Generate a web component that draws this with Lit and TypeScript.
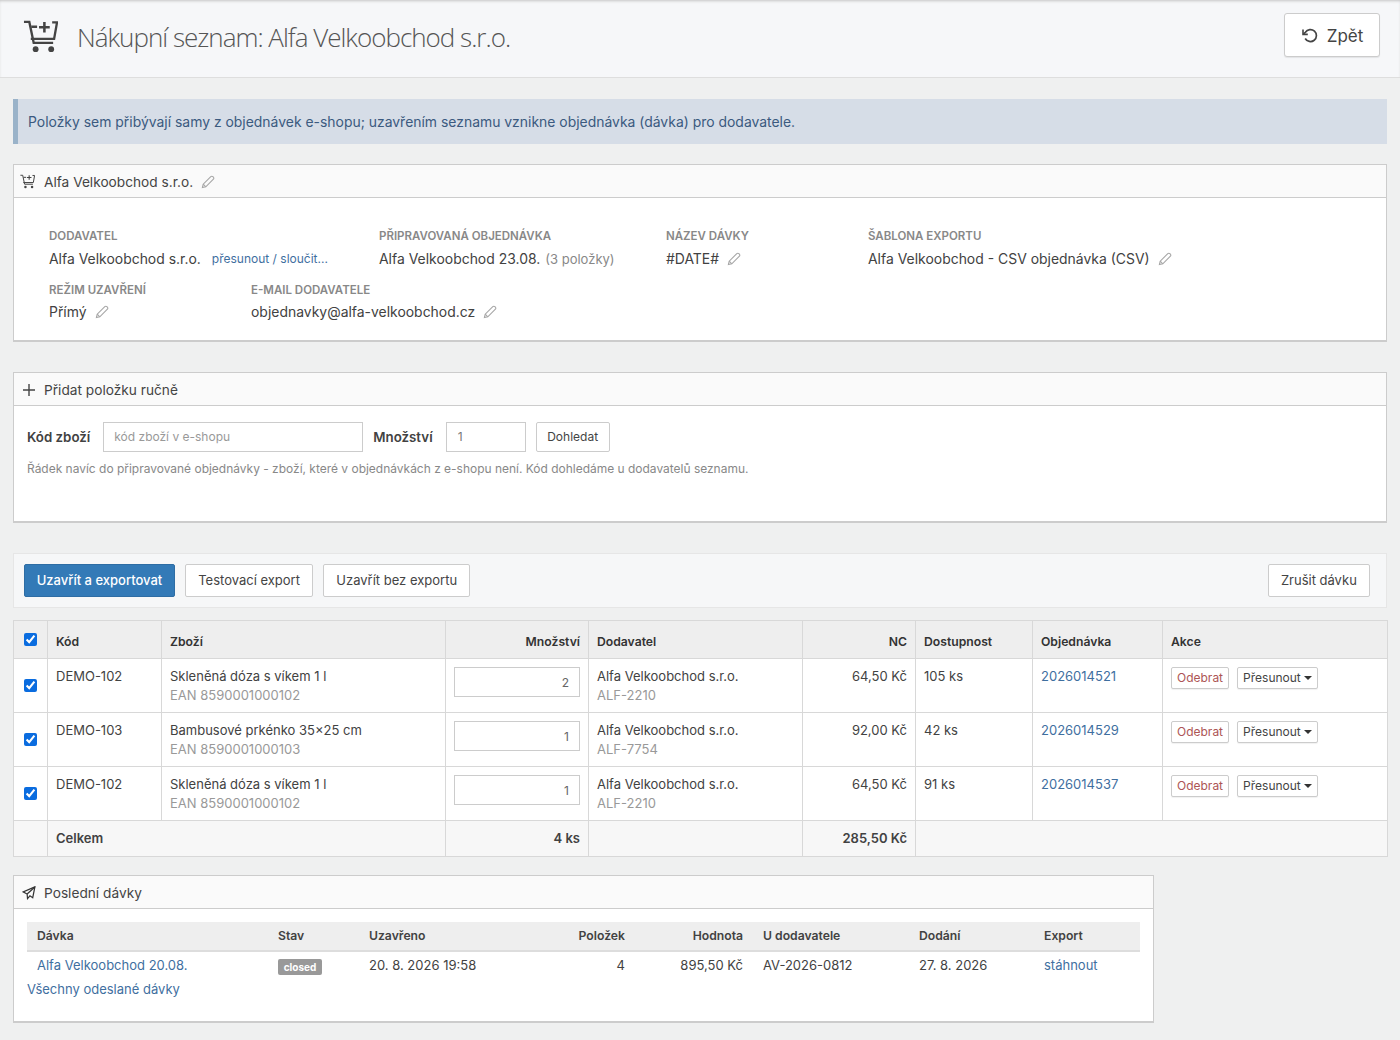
import { LitElement, html, css, svg } from "lit";
import { customElement } from "lit/decorators.js";

const cartIcon = (size: number) => html`<svg class="cart" width=${size} height=${size} viewBox="0 0 36 36" fill="none" stroke="currentColor">
  ${svg`<path d="M1 3h5.5l4.5 21.5h20" stroke-width="2.4"/>
  <path d="M8 20.5h24l3-17h-5M8.5 8h6" stroke-width="2.4"/>
  <path d="M22 3v11M16.5 8.5h11" stroke-width="2.6"/>
  <circle cx="13" cy="31" r="3" fill="currentColor" stroke="none"/>
  <circle cx="29" cy="31" r="3" fill="currentColor" stroke="none"/>`}
</svg>`;

const pencil = html`<svg class="pencil" width="14" height="14" viewBox="0 0 14 14" fill="none" stroke="#a6a6a6" stroke-width="1.1">
  ${svg`<path d="M1.4 12.6l.8-3.4L9.8 1.6a1.4 1.4 0 0 1 2 0l.6.6a1.4 1.4 0 0 1 0 2L4.8 11.8z"/><path d="M2.2 9.2l2.6 2.6"/>`}
</svg>`;

const items = [
  { code: "DEMO-102", name: "Skleněná dóza s víkem 1 l", ean: "EAN 8590001000102", qty: 2, sku: "ALF-2210", nc: "64,50 Kč", stock: "105 ks", order: "2026014521" },
  { code: "DEMO-103", name: "Bambusové prkénko 35×25 cm", ean: "EAN 8590001000103", qty: 1, sku: "ALF-7754", nc: "92,00 Kč", stock: "42 ks", order: "2026014529" },
  { code: "DEMO-102", name: "Skleněná dóza s víkem 1 l", ean: "EAN 8590001000102", qty: 1, sku: "ALF-2210", nc: "64,50 Kč", stock: "91 ks", order: "2026014537" },
];

@customElement("app-root")
export class AppRoot extends LitElement {
  static styles = css`
    :host {
      display: block;
      min-height: 1040px;
      background: #eff0f0;
      font-family: Inter, "Noto Sans", sans-serif;
      font-size: 14px;
      line-height: 20px;
      color: #424242;
      overflow: hidden;
    }
    * { box-sizing: border-box; }
    a { color: #3f6f9f; text-decoration: none; }

    .page-head {
      height: 78px;
      padding: 0 20px 7px 23px;
      display: flex;
      align-items: center;
      justify-content: space-between;
      background: #f6f7f9;
      border-bottom: 1px solid #dedede;
      box-shadow: inset 0 2px 3px -1px #c4c4c4;
    }
    .title { display: flex; align-items: center; gap: 19px; margin-top: 3px; color: #555; }
    .title .cart { color: #444; }
    h1 {
      margin: 0;
      font-family: "Open Sans", sans-serif;
      font-weight: 300;
      font-size: 26px;
      letter-spacing: -1px;
      line-height: 36px;
      color: #555;
    }
    .back {
      width: 96px;
      height: 44px;
      padding-top: 1px;
      display: flex;
      align-items: center;
      justify-content: center;
      gap: 8px;
      background: #fff;
      border: 1px solid #ccc;
      border-radius: 3px;
      font-size: 17px;
      color: #444;
      box-shadow: 0 1px 1px rgba(0,0,0,.08);
    }

    .content { padding: 21px 13px 0; }
    .alert {
      height: 45px;
      display: flex;
      align-items: center;
      padding-left: 10px;
      background: #d6dde7;
      border-left: 5px solid #9ab3c9;
      font-size: 13.93px;
      color: #3b5a7f;
    }

    .panel {
      background: #fff;
      border: 1px solid #ccc;
      border-bottom-width: 2px;
    }
    .panel-head {
      height: 33px;
      display: flex;
      align-items: center;
      gap: 8px;
      padding: 1px 0 0 8px;
      background: #fafafa;
      border-bottom: 1px solid #ccc;
      font-size: 13.7px;
      color: #444;
    }
    .panel-head .cart { color: #444; margin: 0 1px 0 -2px; }
    .supplier { margin-top: 20px; height: 178px; }
    .manual { margin-top: 30px; height: 151px; }

    .facts { padding: 30px 35px 0; }
    .facts-row { display: flex; height: 54px; }
    .fact { flex: none; }
    .fact label {
      display: block;
      height: 16px;
      font-size: 11.5px;
      line-height: 16px;
      font-weight: 600;
      color: #888;
      text-transform: uppercase;
    }
    .fact .val { display: flex; align-items: center; gap: 8px; margin-top: 5px; font-size: 13.95px; }
    .facts-row + .facts-row .val { margin-top: 4px; }
    .fact .muted { color: #888; font-size: 13px; margin-left: -3px; }
    .fact a { font-size: 12px; margin-left: 3px; }
    .f1 { width: 330px; }
    .f2 { width: 287px; }
    .f3 { width: 202px; }
    .f4 { width: 400px; }
    .f5 { width: 202px; }

    .add-form { padding: 16px 13px; }
    .add-row { display: flex; align-items: center; gap: 10px; }
    .add-row b { font-size: 13.3px; font-weight: 600; }
    .add-row b + .input { margin-left: 3px; }
    .input {
      height: 30px;
      display: flex;
      align-items: center;
      padding: 0 10px;
      background: #fff;
      border: 1px solid #ccc;
      font-size: 12px;
      color: #999;
    }
    .input.code { width: 260px; }
    .input.qty { width: 80px; padding-left: 11px; color: #777; }
    .btn {
      display: inline-flex;
      align-items: center;
      justify-content: center;
      background: #fff;
      border: 1px solid #ccc;
      border-radius: 2px;
      color: #444;
    }
    .btn.search { height: 30px; width: 74px; font-size: 12px; }
    .hint { margin-top: 7px; font-size: 11.97px; color: #888; }

    .toolbar {
      margin-top: 30px;
      height: 55px;
      display: flex;
      align-items: center;
      gap: 10px;
      padding: 0 16px 0 10px;
      background: #f6f7f8;
      border: 1px solid #e6e6e6;
    }
    .toolbar .btn { height: 33px; padding: 0 12.2px 1px; font-size: 13px; }
    .toolbar .primary { width: 151px; padding: 0 0 1px; background: #337ab7; border-color: #2e6da4; color: #fff; font-weight: 500; }
    .toolbar .end { margin-left: auto; }

    table { border-collapse: collapse; table-layout: fixed; }
    .items { margin-top: 12px; width: 1374px; background: #fff; font-size: 13px; line-height: 19px; }
    .items th, .items td { border: 1px solid #d8d8d8; padding: 0 8px; vertical-align: top; text-align: left; font-weight: 400; }
    .items thead th {
      height: 38px;
      padding-top: 4px;
      vertical-align: middle;
      background: #eee;
      font-size: 12.2px;
      font-weight: 600;
      color: #333;
    }
    .items thead .chk { padding: 0 0 3px; }
    .items tbody td { height: 54px; padding-top: 8px; }
    .items tfoot td { height: 36px; vertical-align: middle; background: #f7f7f7; font-weight: 600; }
    .items .r { text-align: right; }
    .items .chk { padding: 0; text-align: center; }
    .items tbody .chk { vertical-align: middle; padding: 0 0 2px; }
    input[type="checkbox"] { width: 13px; height: 13px; margin: 0; display: inline-block; vertical-align: middle; accent-color: #0a6cdf; }
    .sub { display: block; color: #999; }
    .qty-box {
      height: 30px;
      display: flex;
      align-items: center;
      justify-content: flex-end;
      padding: 0 10px;
      border: 1px solid #ccc;
      font-size: 12px;
      color: #666;
    }
    .actions { display: flex; gap: 8px; }
    .actions .btn { height: 22px; padding: 0 5px 1px; font-size: 12px; box-shadow: 0 1px 1px rgba(0,0,0,.06); }
    .actions .danger { color: #ad5555; }
    .caret {
      display: inline-block;
      width: 0;
      height: 0;
      margin: 1px 0 0 3px;
      border-left: 4px solid transparent;
      border-right: 4px solid transparent;
      border-top: 4px solid #333;
    }

    .history { margin-top: 18px; width: 1141px; height: 148px; }
    .history-body { padding: 13px 13px 0; }
    .batches { width: 1113px; font-size: 13px; }
    .batches th {
      height: 29px;
      padding: 0 10px;
      background: #eee;
      border-bottom: 2px solid #ddd;
      text-align: left;
      font-size: 12.2px;
      font-weight: 600;
    }
    .batches td { height: 26px; padding: 0 10px; }
    .batches .r { text-align: right; }
    .badge {
      display: block;
      width: 44px;
      height: 16px;
      margin-top: 4px;
      text-align: center;
      border-radius: 2px;
      background: #999;
      color: #fff;
      font-size: 10px;
      line-height: 16px;
      font-weight: 700;
    }
    .all { display: block; margin-top: 2px; font-size: 13px; }
  `;

  render() {
    return html`
      <header class="page-head">
        <div class="title">${cartIcon(35)}<h1>Nákupní seznam: Alfa Velkoobchod s.r.o.</h1></div>
        <div class="back">
          <svg width="18" height="18" viewBox="0 0 18 18" fill="none" stroke="#444" stroke-width="1.7">
            ${svg`<path d="M4.2 11.5a6 6 0 1 0 .2-6.2L2.4 7"/><path d="M2 2.6V7.4h4.8" stroke-width="1.6"/>`}
          </svg>
          Zpět
        </div>
      </header>

      <main class="content">
        <div class="alert">Položky sem přibývají samy z objednávek e-shopu; uzavřením seznamu vznikne objednávka (dávka) pro dodavatele.</div>

        <section class="panel supplier">
          <div class="panel-head">${cartIcon(15)}<span>Alfa Velkoobchod s.r.o.</span>${pencil}</div>
          <div class="facts">
            <div class="facts-row">
              <div class="fact f1"><label>Dodavatel</label><div class="val">Alfa Velkoobchod s.r.o. <a href="#">přesunout / sloučit...</a></div></div>
              <div class="fact f2"><label>Připravovaná objednávka</label><div class="val">Alfa Velkoobchod 23.08. <span class="muted">(3 položky)</span></div></div>
              <div class="fact f3"><label>Název dávky</label><div class="val">#DATE# ${pencil}</div></div>
              <div class="fact f4"><label>Šablona exportu</label><div class="val">Alfa Velkoobchod - CSV objednávka (CSV) ${pencil}</div></div>
            </div>
            <div class="facts-row">
              <div class="fact f5"><label>Režim uzavření</label><div class="val">Přímý ${pencil}</div></div>
              <div class="fact f4"><label>E-mail dodavatele</label><div class="val">objednavky@alfa-velkoobchod.cz ${pencil}</div></div>
            </div>
          </div>
        </section>

        <section class="panel manual">
          <div class="panel-head">
            <svg width="14" height="14" viewBox="0 0 14 14" stroke="#444" stroke-width="1.4">${svg`<path d="M7 1v12M1 7h12"/>`}</svg>
            <span>Přidat položku ručně</span>
          </div>
          <div class="add-form">
            <div class="add-row">
              <b>Kód zboží</b><div class="input code">kód zboží v e-shopu</div>
              <b>Množství</b><div class="input qty">1</div>
              <div class="btn search">Dohledat</div>
            </div>
            <div class="hint">Řádek navíc do připravované objednávky - zboží, které v objednávkách z e-shopu není. Kód dohledáme u dodavatelů seznamu.</div>
          </div>
        </section>

        <div class="toolbar">
          <div class="btn primary">Uzavřít a exportovat</div>
          <div class="btn">Testovací export</div>
          <div class="btn">Uzavřít bez exportu</div>
          <div class="btn end">Zrušit dávku</div>
        </div>

        <table class="items">
          <colgroup>
            <col style="width:34px" /><col style="width:114px" /><col style="width:284px" /><col style="width:143px" />
            <col style="width:214px" /><col style="width:113px" /><col style="width:117px" /><col style="width:130px" /><col style="width:225px" />
          </colgroup>
          <thead>
            <tr>
              <th class="chk"><input type="checkbox" checked /></th>
              <th>Kód</th><th>Zboží</th><th class="r">Množství</th><th>Dodavatel</th>
              <th class="r">NC</th><th>Dostupnost</th><th>Objednávka</th><th>Akce</th>
            </tr>
          </thead>
          <tbody>
            ${items.map(
              (it) => html`<tr>
                <td class="chk"><input type="checkbox" checked /></td>
                <td>${it.code}</td>
                <td>${it.name}<span class="sub">${it.ean}</span></td>
                <td><div class="qty-box">${it.qty}</div></td>
                <td>Alfa Velkoobchod s.r.o.<span class="sub">${it.sku}</span></td>
                <td class="r">${it.nc}</td>
                <td>${it.stock}</td>
                <td><a href="#">${it.order}</a></td>
                <td><div class="actions"><div class="btn danger">Odebrat</div><div class="btn">Přesunout<span class="caret"></span></div></div></td>
              </tr>`
            )}
          </tbody>
          <tfoot>
            <tr>
              <td></td><td colspan="2">Celkem</td><td class="r">4 ks</td><td></td><td class="r">285,50 Kč</td><td colspan="3"></td>
            </tr>
          </tfoot>
        </table>

        <section class="panel history">
          <div class="panel-head">
            <svg width="14" height="14" viewBox="0 0 15 15" fill="none" stroke="#333" stroke-width="1.3">${svg`<path d="M13.8 1L1.2 6.3l4.3 2.3.4 4.9 2.6-3 3 2z"/><path d="M13.8 1L5.5 8.6"/>`}</svg>
            <span>Poslední dávky</span>
          </div>
          <div class="history-body">
            <table class="batches">
              <colgroup>
                <col style="width:241px" /><col style="width:91px" /><col style="width:180px" /><col style="width:96px" />
                <col style="width:118px" /><col style="width:156px" /><col style="width:125px" /><col style="width:106px" />
              </colgroup>
              <thead>
                <tr><th>Dávka</th><th>Stav</th><th>Uzavřeno</th><th class="r">Položek</th><th class="r">Hodnota</th><th>U dodavatele</th><th>Dodání</th><th>Export</th></tr>
              </thead>
              <tbody>
                <tr>
                  <td><a href="#">Alfa Velkoobchod 20.08.</a></td>
                  <td><span class="badge">closed</span></td>
                  <td>20. 8. 2026 19:58</td>
                  <td class="r">4</td>
                  <td class="r">895,50 Kč</td>
                  <td>AV-2026-0812</td>
                  <td>27. 8. 2026</td>
                  <td><a href="#">stáhnout</a></td>
                </tr>
              </tbody>
            </table>
            <a class="all" href="#">Všechny odeslané dávky</a>
          </div>
        </section>
      </main>
    `;
  }
}

declare global {
  interface HTMLElementTagNameMap {
    "app-root": AppRoot;
  }
}
